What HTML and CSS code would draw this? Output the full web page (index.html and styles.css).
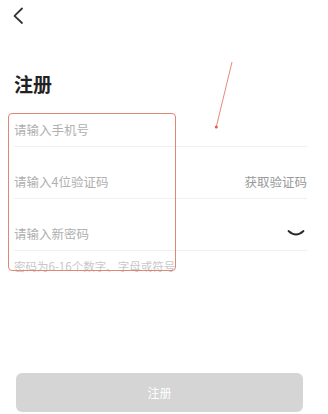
FILE: index.html
```html
<!DOCTYPE html>
<html lang="zh-CN">
<head>
  <meta charset="UTF-8">
  <meta name="viewport" content="width=device-width, initial-scale=1.0">
  <title>注册</title>
  <link rel="stylesheet" href="styles.css">
</head>
<body>
  <div class="page">
    <div class="topbar">
      <svg class="back-icon" width="14" height="18" viewBox="0 0 14 18">
        <path d="M11 1.5 L3.5 8.8 L11 16" fill="none" stroke="#333" stroke-width="1.8" stroke-linecap="round" stroke-linejoin="round"/>
      </svg>
    </div>

    <h1 class="title">注册</h1>

    <div class="form">
      <div class="row">
        <span class="placeholder">请输入手机号</span>
      </div>
      <div class="row">
        <span class="placeholder">请输入4位验证码</span>
        <span class="get-code">获取验证码</span>
      </div>
      <div class="row">
        <span class="placeholder">请输入新密码</span>
        <svg class="eye-icon" width="18" height="8" viewBox="0 0 18 8">
          <path d="M1.5 2 Q9 9 16.5 2" fill="none" stroke="#2a2a2a" stroke-width="1.8" stroke-linecap="round"/>
        </svg>
      </div>
      <p class="hint">密码为6-16个数字、字母或符号</p>
    </div>

    <div class="footer">
      <button class="submit-btn">注册</button>
    </div>

    <!-- annotation overlay -->
    <div class="mark-box"></div>
    <svg class="mark-arrow" width="328" height="414" viewBox="0 0 328 414">
      <line x1="232" y1="62" x2="216.5" y2="126" stroke="#e58a7a" stroke-width="1"/>
      <circle cx="216.3" cy="127" r="1.5" fill="#d9604d"/>
    </svg>
  </div>
</body>
</html>
```

FILE: styles.css
```css
* {
  box-sizing: border-box;
}

body {
  margin: 0;
  background: #fff;
  font-family: "Noto Sans CJK SC", "Noto Sans", sans-serif;
}

.page {
  position: relative;
  width: 328px;
  height: 414px;
  display: flex;
  flex-direction: column;
  overflow: hidden;
}

.topbar {
  height: 30px;
  padding: 7px 0 0 11px;
}

.back-icon {
  display: block;
}

.title {
  margin: 42px 0 0 14px;
  font-size: 19px;
  line-height: 23px;
  font-weight: bold;
  color: #222;
}

.form {
  padding: 0 21px 0 14px;
}

.row {
  height: 52px;
  display: flex;
  align-items: flex-end;
  justify-content: space-between;
  padding-bottom: 9px;
  border-bottom: 1px solid #f0f0f0;
  font-size: 12.5px;
  line-height: 14px;
}

.placeholder {
  color: #b0b0b0;
}

.get-code {
  color: #9a9a9a;
}

.eye-icon {
  margin: 0 2px 4px 0;
}

.hint {
  margin: 8px 0 0;
  font-size: 11.5px;
  line-height: 14px;
  color: #c8c8c8;
}

.footer {
  margin-top: auto;
  padding: 0 25px 2px 16px;
}

.submit-btn {
  display: block;
  width: 100%;
  height: 39px;
  border: none;
  border-radius: 6px;
  background: #d5d5d5;
  color: #fff;
  font-family: inherit;
  font-size: 12px;
}

.mark-box {
  position: absolute;
  left: 8px;
  top: 113px;
  width: 168px;
  height: 158px;
  border: 1.5px solid #df8677;
  border-radius: 4px;
}

.mark-arrow {
  position: absolute;
  left: 0;
  top: 0;
  pointer-events: none;
}
```
